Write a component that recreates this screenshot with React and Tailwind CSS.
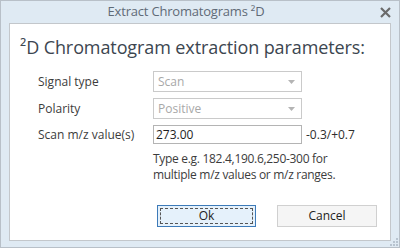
import React from "react";

function Combo({ value }) {
  return (
    <div className="w-[149px] h-[21px] border border-[#cacaca] bg-white flex items-center justify-between pl-[4px] pr-[6px]">
      <span className="text-[#a8a8a8]">{value}</span>
      <svg width="7" height="4" viewBox="0 0 7 4">
        <path d="M0 0H7L3.5 4Z" fill="#b4b4b4" />
      </svg>
    </div>
  );
}

export default function App() {
  return (
    <div
      className="w-[400px] h-[248px] bg-[#dfeaf3] border border-[#b8c0c8] flex flex-col text-[12px] text-[#3c3c3c]"
      style={{ fontFamily: '"Open Sans", "Noto Sans", sans-serif' }}
    >
      <div className="h-[22px] relative flex items-center justify-center pr-[28px]">
        <span className="text-[13px] text-[#5f6b77] -mt-[1px] tracking-[-0.2px]">Extract Chromatograms ²D</span>
        <svg className="absolute right-[8px] top-[6px]" width="11" height="11" viewBox="0 0 11 11">
          <path d="M1 1L10 10M10 1L1 10" stroke="#6b6b6b" strokeWidth="2.2" />
        </svg>
      </div>
      <div className="mx-[8px] h-[218px] bg-white border border-[#c3c7cb] flex flex-col">
        <div className="pl-[10px] pt-[10px] text-[18px] leading-[26px] tracking-[-0.1px] whitespace-nowrap text-[#3c4650]">
          ²D Chromatogram extraction parameters:
        </div>
        <div className="mt-[11px] pl-[28px] grid grid-cols-[115px_auto] gap-y-[6px] items-center">
          <span>Signal type</span>
          <Combo value="Scan" />
          <span>Polarity</span>
          <Combo value="Positive" />
          <span>Scan m/z value(s)</span>
          <div className="flex items-center">
            <div className="w-[149px] h-[19px] border border-[#b4b4b4] bg-white flex items-center pl-[2px] text-[#1e1e1e]">
              273.00
            </div>
            <span className="ml-[4px] text-[#2e2e2e]">-0.3/+0.7</span>
          </div>
        </div>
        <div className="pl-[143px] mt-[7px] leading-[16px] tracking-[-0.3px] text-[#3c3c3c]">
          Type e.g. 182.4,190.6,250-300 for
          <br />
          multiple m/z values or m/z ranges.
        </div>
        <div className="mt-[22px] pl-[147px] flex gap-[21px]">
          <div className="w-[99px] h-[22px] border border-[#3d7ab8] bg-[#e5f1fb] p-[2px]">
            <div className="w-full h-full border border-dashed border-[#555] flex items-center justify-center text-[#222]">
              Ok
            </div>
          </div>
          <div className="w-[100px] h-[22px] border border-[#d0d0d0] bg-[#f5f5f5] flex items-center justify-center text-[#222]">
            Cancel
          </div>
        </div>
      </div>
      <div className="relative flex-1">
        <svg className="absolute right-[1px] bottom-[1px]" width="10" height="10" viewBox="0 0 10 10">
          {[[8, 2], [8, 5], [5, 5], [8, 8], [5, 8], [2, 8]].map(([x, y], i) => (
            <rect key={i} x={x} y={y} width="2" height="2" fill="#b8c4d0" />
          ))}
        </svg>
      </div>
    </div>
  );
}
